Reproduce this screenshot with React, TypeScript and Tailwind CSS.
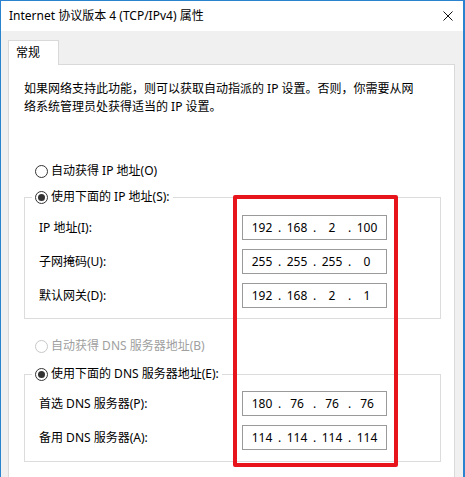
import React from "react";

function Radio({ checked, disabled }: { checked?: boolean; disabled?: boolean }) {
  return (
    <span
      className={`flex items-center justify-center w-[13px] h-[13px] rounded-full border bg-white ${
        disabled ? "border-[#c8c8c8]" : "border-[#333333]"
      }`}
    >
      {checked && <span className="w-[7px] h-[7px] rounded-full bg-[#333333]" />}
    </span>
  );
}

function RadioRow({ label, checked, disabled }: { label: string; checked?: boolean; disabled?: boolean }) {
  return (
    <div className={`flex items-center h-[18px] gap-[3px] ${disabled ? "text-[#a0a0a0]" : "text-black"}`}>
      <Radio checked={checked} disabled={disabled} />
      <span>{label}</span>
    </div>
  );
}

function IpBox({ parts }: { parts: string[] }) {
  return (
    <div className="flex items-center h-[25px] w-[145px] border border-[#9a9a9a] bg-white pl-[5px]">
      {parts.map((p, i) => (
        <React.Fragment key={i}>
          {i > 0 && <span className="w-[7px] text-center">.</span>}
          <span className="w-[28px] text-center">{p}</span>
        </React.Fragment>
      ))}
    </div>
  );
}

function Row({ label, parts }: { label: string; parts: string[] }) {
  return (
    <div className="flex items-center h-[25px]">
      <span className="w-[203px]">{label}</span>
      <IpBox parts={parts} />
    </div>
  );
}

export default function App() {
  return (
    <div className="relative w-[465px] h-[477px] overflow-hidden bg-[#f0f0f0] border-t border-l border-r-2 border-[#2b83cf] font-['Noto_Sans','Noto_Sans_CJK_SC',sans-serif] text-[12px] leading-[18px] text-black">
      <div className="h-[30px] bg-white flex items-center justify-between pl-[8px] pr-[10px]">
        <span>Internet 协议版本 4 (TCP/IPv4) 属性</span>
        <svg width="10" height="10" viewBox="0 0 10 10">
          <path d="M0.5 0.5 L9.5 9.5 M9.5 0.5 L0.5 9.5" stroke="#111" strokeWidth="1" fill="none" />
        </svg>
      </div>
      <div className="pl-[7px] pt-[9px]">
        <div className="relative z-10 -mb-px w-[51px] h-[25px] border border-b-0 border-[#d9d9d9] bg-white pl-[7px] leading-[24px]">
          常规
        </div>
        <div className="w-[447px] h-[420px] border border-[#d9d9d9] bg-white pt-[15px] pl-[15px] pr-[13px]">
          <p>
            如果网络支持此功能，则可以获取自动指派的 IP 设置。否则，你需要从网
            <br />
            络系统管理员处获得适当的 IP 设置。
          </p>
          <div className="mt-[46px] ml-[11px]">
            <RadioRow label="自动获得 IP 地址(O)" />
          </div>
          <fieldset className="mt-[8px] w-[417px] border border-[#dcdcdc]">
            <legend className="ml-[7px] px-[3px] bg-white">
              <RadioRow label="使用下面的 IP 地址(S):" checked />
            </legend>
            <div className="pl-[14px] pt-[9px] pb-[10px] flex flex-col gap-[9px]">
              <Row label="IP 地址(I):" parts={["192", "168", "2", "100"]} />
              <Row label="子网掩码(U):" parts={["255", "255", "255", "0"]} />
              <Row label="默认网关(D):" parts={["192", "168", "2", "1"]} />
            </div>
          </fieldset>
          <div className="mt-[18px] ml-[11px]">
            <RadioRow label="自动获得 DNS 服务器地址(B)" disabled />
          </div>
          <fieldset className="mt-[10px] w-[417px] border border-[#dcdcdc]">
            <legend className="ml-[7px] px-[3px] bg-white">
              <RadioRow label="使用下面的 DNS 服务器地址(E):" checked />
            </legend>
            <div className="pl-[14px] pt-[8px] pb-[11px] flex flex-col gap-[9px]">
              <Row label="首选 DNS 服务器(P):" parts={["180", "76", "76", "76"]} />
              <Row label="备用 DNS 服务器(A):" parts={["114", "114", "114", "114"]} />
            </div>
          </fieldset>
        </div>
      </div>
      <div className="absolute left-[232px] top-[194px] w-[165px] h-[272px] border-4 border-[#e8141c] rounded-[2px]" />
    </div>
  );
}
